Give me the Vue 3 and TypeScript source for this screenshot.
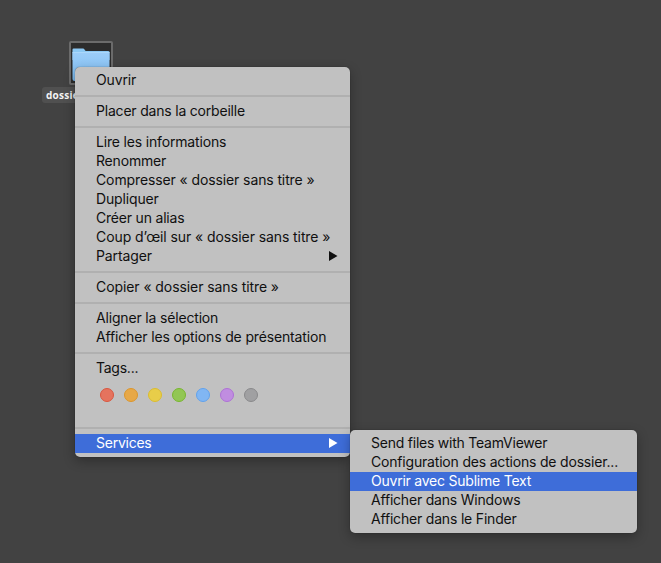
<script setup lang="ts">
interface MenuItem {
  label: string
  tracking: number
  arrow?: boolean
  active?: boolean
}

const groups: MenuItem[][] = [
  [{ label: 'Ouvrir', tracking: -0.15 }],
  [{ label: 'Placer dans la corbeille', tracking: -0.2 }],
  [
    { label: 'Lire les informations', tracking: -0.17 },
    { label: 'Renommer', tracking: -0.18 },
    { label: 'Compresser « dossier sans titre »', tracking: -0.11 },
    { label: 'Dupliquer', tracking: -0.15 },
    { label: 'Créer un alias', tracking: -0.2 },
    { label: 'Coup d’œil sur « dossier sans titre »', tracking: -0.09 },
    { label: 'Partager', tracking: -0.12, arrow: true },
  ],
  [{ label: 'Copier « dossier sans titre »', tracking: -0.08 }],
  [
    { label: 'Aligner la sélection', tracking: -0.17 },
    { label: 'Afficher les options de présentation', tracking: -0.15 },
  ],
]

const tags: string[] = ['red', 'orange', 'yellow', 'green', 'blue', 'purple', 'gray']

const services: MenuItem[] = [
  { label: 'Send files with TeamViewer', tracking: -0.23 },
  { label: 'Configuration des actions de dossier...', tracking: -0.19 },
  { label: 'Ouvrir avec Sublime Text', tracking: -0.23 },
  { label: 'Afficher dans Windows', tracking: -0.2 },
  { label: 'Afficher dans le Finder', tracking: -0.19 },
]
services[2].active = true
</script>

<template>
  <main class="desktop">
    <div class="folder">
      <div class="thumb">
        <svg width="38" height="34" viewBox="0 0 38 34">
          <defs>
            <linearGradient id="folder-front" x1="0" y1="0" x2="0" y2="1">
              <stop offset="0" stop-color="#9ccdf8" />
              <stop offset="1" stop-color="#7bbcf2" />
            </linearGradient>
          </defs>
          <path d="M0.500 4V1.500Q0.500 0.500 1.500 0.500H11Q12 0.500 12.500 1.500Q13 3 14.500 3H36Q37.500 3 37.500 4V12H0.500Z" fill="#8cc8f3" />
          <path d="M0.500 4.500H37.500V31Q37.500 33 35.500 33H2.500Q0.500 33 0.500 31Z" fill="url(#folder-front)" />
          <path d="M0.500 4.500H37.500" stroke="#aad7fa" />
        </svg>
      </div>
      <span class="name">dossier sans titre</span>
    </div>

    <div class="menu context">
      <template v-for="(group, g) in groups" :key="g">
        <div v-for="item in group" :key="item.label" class="item">
          <span class="label" :style="{ letterSpacing: item.tracking + 'px' }">{{ item.label }}</span>
          <svg v-if="item.arrow" class="arrow" width="9" height="10" viewBox="0 0 9 10"><path d="M0 0L8.500 5L0 10Z" /></svg>
        </div>
        <div class="separator"></div>
      </template>
      <div class="item"><span class="label tight">Tags...</span></div>
      <div class="tags">
        <i v-for="tag in tags" :key="tag" class="tag" :class="tag"></i>
      </div>
      <div class="separator"></div>
      <div class="item active">
        <span class="label tight">Services</span>
        <svg class="arrow" width="9" height="10" viewBox="0 0 9 10"><path d="M0 0L8.500 5L0 10Z" /></svg>
      </div>
    </div>

    <div class="menu submenu">
      <div v-for="item in services" :key="item.label" class="item" :class="{ active: item.active }">
        <span class="label" :style="{ letterSpacing: item.tracking + 'px' }">{{ item.label }}</span>
      </div>
    </div>
  </main>
</template>

<style>
body {
  background: #424242;
}
</style>

<style scoped>
.desktop {
  position: relative;
  height: 563px;
  overflow: hidden;
  background: #424242;
  font-family: Inter, "Liberation Sans", sans-serif;
}
.folder {
  position: absolute;
  left: 42px;
  top: 41px;
  width: 98px;
  display: flex;
  flex-direction: column;
  align-items: center;
  gap: 2px;
}
.thumb {
  box-sizing: border-box;
  width: 44px;
  height: 44px;
  padding-top: 5px;
  display: flex;
  justify-content: center;
  border: 2px solid #6b6b6b;
  border-radius: 2px;
  background: #2c2c2c;
}
.name {
  box-sizing: border-box;
  width: 98px;
  height: 16px;
  padding-left: 4px;
  border-radius: 3px;
  background: #505050;
  color: #f4f4f4;
  font-family: "Open Sans", sans-serif;
  font-size: 10px;
  font-weight: 700;
  letter-spacing: 0.25px;
  line-height: 16px;
  white-space: nowrap;
}
.menu {
  position: absolute;
  box-sizing: border-box;
  padding: 4px 0;
  border-radius: 5px;
  background: #c1c1c1;
  box-shadow: 0 0 1px rgba(0, 0, 0, 0.6), 0 4px 12px rgba(0, 0, 0, 0.3);
}
.context {
  left: 75px;
  top: 67px;
  width: 275px;
}
.submenu {
  left: 350px;
  top: 430px;
  width: 287px;
}
.item {
  display: flex;
  align-items: flex-start;
  justify-content: space-between;
  height: 19px;
  padding: 0 12px 0 21px;
  color: #101010;
  font-size: 14px;
  white-space: nowrap;
}
.item.active {
  background: #3e6dd9;
  color: #fff;
}
.label {
  line-height: 17px;
}
.tight {
  letter-spacing: -0.25px;
}
.arrow {
  margin-top: 4px;
  fill: currentColor;
}
.separator {
  height: 2px;
  margin: 5px 0;
  background: #b0b0b0;
}
.tags {
  display: flex;
  gap: 10px;
  height: 34px;
  padding: 10px 0 0 25px;
}
.tag {
  box-sizing: border-box;
  width: 14px;
  height: 14px;
  border: 1px solid;
  border-radius: 50%;
}
.red { background: #e5735e; border-color: #d9563f; }
.orange { background: #e7a848; border-color: #dc962c; }
.yellow { background: #e8cd49; border-color: #dcbd2e; }
.green { background: #92c654; border-color: #79b62f; }
.blue { background: #81b6f3; border-color: #61a2ed; }
.purple { background: #c08de0; border-color: #ae71d6; }
.gray { background: #a0a0a2; border-color: #89898b; }
</style>
